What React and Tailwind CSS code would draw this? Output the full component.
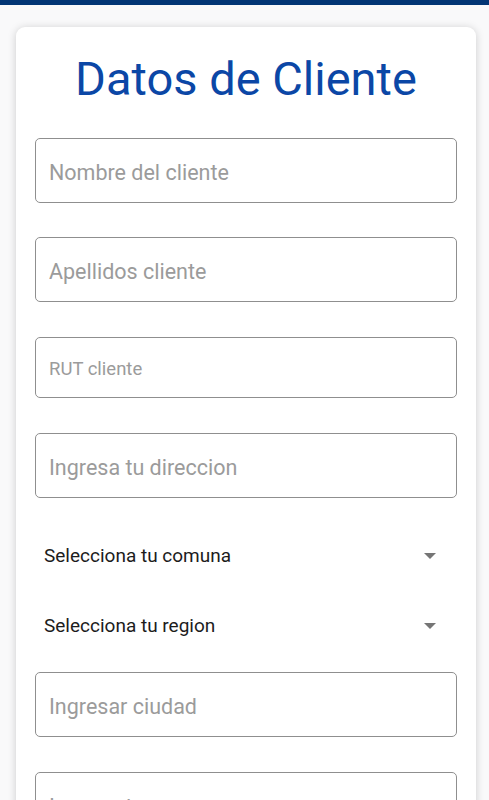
const inputs = [
  { placeholder: "Nombre del cliente" },
  { placeholder: "Apellidos cliente" },
  { placeholder: "RUT cliente", small: true },
  { placeholder: "Ingresa tu direccion" },
];

function Field({ placeholder, small, className = "" }) {
  return (
    <input
      type="text"
      placeholder={placeholder}
      className={`block w-full rounded-[5px] border border-[#8f8f8f] bg-white px-[13px] pt-[3px] text-[#222] outline-none placeholder:text-[#9b9b9b] ${
        small ? "h-[61px] text-[18.5px]" : "h-[65px] text-[21.5px]"
      } ${className}`}
    />
  );
}

function SelectRow({ label, className = "" }) {
  return (
    <div className={`flex h-[48px] items-center justify-between pl-[9px] pr-[21px] ${className}`}>
      <span className="text-[19px] text-[#1c1c1c]">{label}</span>
      <svg width="12" height="6" viewBox="0 0 12 6" className="text-[#757575]">
        <path d="M0 0h12L6 6z" fill="currentColor" />
      </svg>
    </div>
  );
}

export default function App() {
  return (
    <div
      className="h-[800px] overflow-hidden bg-[#f9f9fa]"
      style={{ fontFamily: "Roboto, 'Liberation Sans', sans-serif" }}
    >
      <div className="h-[5px] bg-[#023574]" />
      <div className="pl-[16px] pr-[13px] pt-[22px]">
        <div className="min-h-[900px] rounded-[9px] bg-white px-[19px] pt-[25px] shadow-[0_1px_8px_rgba(0,0,0,0.18)]">
          <h1 className="text-center text-[47px] leading-[54px] font-normal text-[#0b47a6]">
            Datos de Cliente
          </h1>

          <div className="mt-[32px] flex flex-col">
            {inputs.map((f, i) => (
              <Field
                key={f.placeholder}
                placeholder={f.placeholder}
                small={f.small}
                className={i === 0 ? "" : i === 1 ? "mt-[34px]" : "mt-[35px]"}
              />
            ))}

            <SelectRow label="Selecciona tu comuna" className="mt-[34px]" />
            <SelectRow label="Selecciona tu region" className="mt-[22px]" />

            <Field placeholder="Ingresar ciudad" className="mt-[22px]" />
            <Field placeholder="Ingresa tu correo" className="mt-[35px]" />
          </div>
        </div>
      </div>
    </div>
  );
}
